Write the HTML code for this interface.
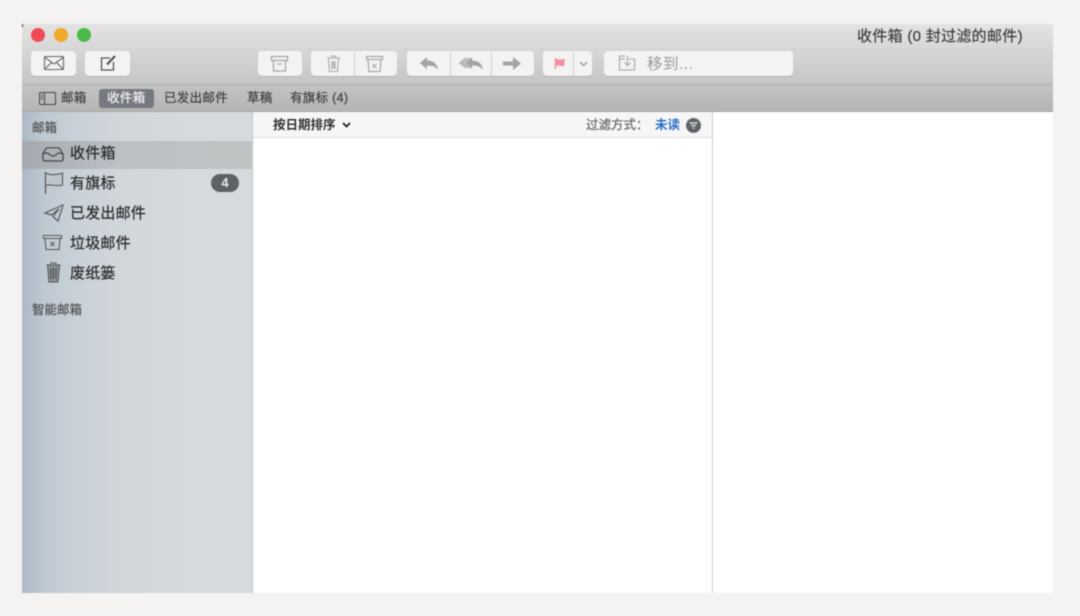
<!DOCTYPE html>
<html><head><meta charset="utf-8"><style>
html,body{margin:0;padding:0;width:1080px;height:616px;overflow:hidden;background:#f4f3f1;font-family:"Liberation Sans","Noto Sans CJK SC",sans-serif}
#w{position:absolute;left:0;top:0;width:1080px;height:616px;filter:blur(.45px)}
.a{position:absolute}
.t{position:absolute;white-space:nowrap;line-height:1;-webkit-text-stroke:.25px currentColor}
.btn{position:absolute;top:51px;height:25px;background:#f3f3f3;border-radius:4px;box-shadow:0 1px 0 rgba(0,0,0,.12)}
.div{position:absolute;top:51px;height:25px;width:1px;background:#cfcfcf}
svg{position:absolute;overflow:visible;fill:none}
.si{font-size:15px;color:#2e2e2e;letter-spacing:.2px}
.tb{font-size:12.5px;color:#444;top:92px;letter-spacing:.3px}
</style></head><body><div id="w">
<div class="a" style="left:22px;top:24px;width:1031px;height:569px;background:#fff"></div>
<div class="a" style="left:22px;top:24px;width:1031px;height:60px;background:linear-gradient(#e3e3e3,#c6c6c6)"></div>
<div class="a" style="left:22px;top:84px;width:1031px;height:1px;background:#b0b0b0"></div>
<div class="a" style="left:22px;top:85px;width:1031px;height:27px;background:linear-gradient(#c3c3c3,#b4b4b4)"></div>
<div class="a" style="left:22px;top:111px;width:1031px;height:1px;background:#a8a8a8"></div>
<div class="a" style="left:22px;top:24px;width:1px;height:3px;background:#333"></div>

<div class="a" style="left:31px;top:28px;width:14px;height:14px;border-radius:50%;background:#ef4a55"></div>
<div class="a" style="left:54px;top:28px;width:14px;height:14px;border-radius:50%;background:#efaa2c"></div>
<div class="a" style="left:77px;top:28px;width:14px;height:14px;border-radius:50%;background:#4cba4a"></div>

<div class="btn" style="left:31px;width:45px"></div>
<svg style="left:44px;top:56px" width="20" height="14" stroke="#666" stroke-width="1.100"><rect x=".5" y=".5" width="19" height="13" rx="1"/><path d="M1 1.500l9 6.500 9-6.500M1 13l6.500-6.500M19 13l-6.500-6.500"/></svg>
<div class="btn" style="left:85px;width:45px"></div>
<svg style="left:100px;top:54px" width="17" height="17" stroke="#555" stroke-width="1.300"><path d="M10 4H1.500v12h12V8"/><path d="M7 10.500l8-8.500" stroke-width="2.200"/></svg>

<div class="btn" style="left:258px;width:44px"></div>
<svg style="left:271px;top:56px" width="18" height="16" stroke="#a8a8a8" stroke-width="1.300"><rect x=".5" y=".5" width="16" height="4"/><path d="M2.500 4.500V15h12V4.500M6 8h5"/></svg>
<div class="btn" style="left:311px;width:86px"></div><div class="div" style="left:354px"></div>
<svg style="left:327px;top:55px" width="14" height="17" stroke="#a8a8a8" stroke-width="1.100"><path d="M0 3h13M4.500 3V1h4v2M1.500 3l1 13.500h8l1-13.500M5 6v8M6.500 6v8M8 6v8"/></svg>
<svg style="left:366px;top:56px" width="18" height="16" stroke="#a8a8a8" stroke-width="1.200"><path d="M.5.500h16v3H.5zM2 3.500l1 12h11l1-12M6.500 8l4 4M10.500 8l-4 4"/></svg>
<div class="btn" style="left:407px;width:127px"></div><div class="div" style="left:450px"></div><div class="div" style="left:491px"></div>
<svg style="left:420px;top:57px" width="19" height="14"><path d="M0 6L7 0v3.500C13 3.500 17 6 18 13 15.500 9.500 12 8.500 7 8.500V12z" fill="#a4a4a4"/></svg>
<svg style="left:459px;top:57px" width="24" height="14"><path d="M6 6L13 0v3.500C19 3.500 23 6 24 13 21.500 9.500 18 8.500 13 8.500V12z" fill="#a4a4a4"/><path d="M7 1L1 6l6 5M10 1L4 6l6 5" stroke="#a4a4a4" stroke-width="1.300"/></svg>
<svg style="left:503px;top:57px" width="18" height="13"><path d="M0 4.500h10V0l8 6.500-8 6.500V8.500H0z" fill="#a4a4a4"/></svg>
<div class="btn" style="left:543px;width:49px"></div><div class="div" style="left:573px"></div>
<svg style="left:554px;top:58px" width="12" height="12"><path d="M1.500 0v11" stroke="#f58fa0" stroke-width="1.500"/><path d="M1.500 .5c3 1.500 6 1.500 9 0v7c-3 1.500-6-.5-9 0z" fill="#f58fa0"/></svg>
<svg style="left:579px;top:61px" width="9" height="6" stroke="#999" stroke-width="1.300"><path d="M1 1l3.500 3.500L8 1"/></svg>
<div class="btn" style="left:604px;width:189px"></div>
<svg style="left:619px;top:55px" width="17" height="16" stroke="#a4a4a4" stroke-width="1.100"><path d="M6 1H.5v14h15V4H10M1 4h5M8.500 1v9M5.500 7.500l3 3 3-3"/></svg>
<div class="t" style="left:647px;top:57px;font-size:15.500px;color:#9a9a9a;letter-spacing:.5px;-webkit-text-stroke:0">移到...</div>

<div class="t" style="left:857px;top:29px;font-size:15px;color:#444;letter-spacing:.3px">收件箱 (0 封过滤的邮件)</div>

<svg style="left:39px;top:92px" width="17" height="13" stroke="#444" stroke-width="1"><rect x=".5" y=".5" width="16" height="12" rx="1"/><path d="M5.500 .5v12M2 3h2M2 5h2M2 7h2"/></svg>
<div class="t tb" style="left:61px">邮箱</div>
<div class="a" style="left:99px;top:89px;width:55px;height:19px;border-radius:3px;background:#767a80"></div>
<div class="t tb" style="left:107px;color:#f1f1f1">收件箱</div>
<div class="t tb" style="left:164px">已发出邮件</div>
<div class="t tb" style="left:247px">草稿</div>
<div class="t tb" style="left:290px">有旗标 (4)</div>

<div class="a" style="left:22px;top:112px;width:231px;height:481px;background:linear-gradient(90deg,#adb9c5 0,#bfc9d2 10%,#cad1d8 24%,#d1d6db 42%,#d7dadc 70%,#d7dadc 100%)"></div>
<div class="a" style="left:22px;top:141px;width:231px;height:28px;background:linear-gradient(90deg,#a6aab0,#bcc0c4 40%,#c0c4c4)"></div>
<div class="a" style="left:252px;top:112px;width:1px;height:481px;background:#c4c8c8"></div>
<div class="t" style="left:32px;top:122px;font-size:12.500px;color:#555">邮箱</div>

<svg style="left:42px;top:147px" width="22" height="15" stroke="#444" stroke-width="1.200"><path d="M.8 7L4 1.500Q4.500 .8 5.500 .8h10.500q1 0 1.500 .7L21 7v5q0 2-2 2H3q-2 0-2-2z"/><path d="M1 7q4-2 6 0t4 2 4-2 6 0"/></svg>
<div class="t si" style="left:70px;top:146px">收件箱</div>
<svg style="left:44px;top:172px" width="20" height="22"><path d="M1.500 0v22" stroke="#5a5a5a" stroke-width="1.300"/><path d="M1.500 1c5 2.500 10 2 17 0v12c-6 2-12-1.500-17 .5z" stroke="#5a5a5a" fill="#c0c5ca" stroke-width="1.100"/></svg>
<div class="t si" style="left:70px;top:176px">有旗标</div>
<div class="a" style="left:211px;top:174px;width:28px;height:18px;border-radius:9px;background:#5e6266;color:#e8e8e8;font-size:13px;font-weight:bold;line-height:18px;text-align:center">4</div>
<svg style="left:44px;top:204px" width="20" height="18" stroke="#5a5a5a" stroke-width="1.200"><path d="M19 1L1 9l6.500 2L15 5 9 12.500 14 17z"/></svg>
<div class="t si" style="left:70px;top:206px">已发出邮件</div>
<svg style="left:43px;top:235px" width="20" height="16" stroke="#5a5a5a" stroke-width="1.100"><path d="M.5.500h18v3H.5zM2 3.500l1 11h13l1-11"/><path d="M7.500 7l4 4M11.500 7l-4 4"/></svg>
<div class="t si" style="left:70px;top:236px">垃圾邮件</div>
<svg style="left:46px;top:262px" width="15" height="21" stroke="#5a5a5a" stroke-width="1.100"><path d="M.5 3h14M5 3V1h5v2"/><path d="M1.500 3l1.500 17h9l1.500-17z" fill="#8f9396"/><path d="M5 6v11M7.500 6v11M10 6v11" stroke="#4a4a4a"/></svg>
<div class="t si" style="left:70px;top:266px">废纸篓</div>
<div class="t" style="left:32px;top:304px;font-size:12.500px;color:#555">智能邮箱</div>

<div class="a" style="left:253px;top:112px;width:460px;height:26px;background:#f6f6f6;border-bottom:1px solid #dedede;box-sizing:border-box"></div>
<div class="a" style="left:712px;top:112px;width:1px;height:481px;background:#cfcfcf"></div>
<div class="t" style="left:273px;top:119px;font-size:12.500px;font-weight:bold;color:#333;-webkit-text-stroke:0">按日期排序</div>
<svg style="left:342px;top:122px" width="9" height="6" stroke="#222" stroke-width="1.800"><path d="M1 1l3.500 3.500L8 1"/></svg>
<div class="t" style="left:586px;top:119px;font-size:12.500px;color:#666">过滤方式：</div>
<div class="t" style="left:655px;top:119px;font-size:12.500px;color:#2c6fc9;font-weight:bold;-webkit-text-stroke:0">未读</div>
<svg style="left:686px;top:118px" width="15" height="15"><circle cx="7.500" cy="7.500" r="7.500" fill="#5f6367"/><path d="M3.500 5h8M5 7.500h5M6.500 10h2" stroke="#ececec" stroke-width="1.200"/></svg>
</div></body></html>
